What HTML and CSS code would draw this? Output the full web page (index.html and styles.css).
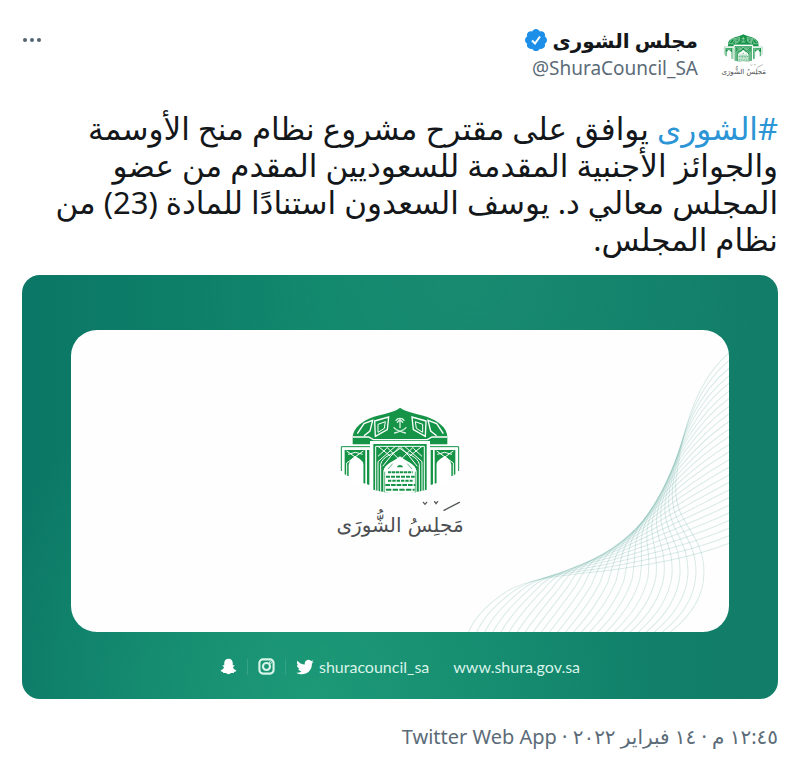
FILE: index.html
```html
<!DOCTYPE html>
<html lang="ar" dir="rtl">
<head>
    <meta charset="UTF-8">
    <meta name="viewport" content="width=device-width, initial-scale=1.0">
    <title>مجلس الشورى</title>
    <link rel="stylesheet" href="styles.css">
</head>
<body>
    <svg class="sprite" aria-hidden="true">
        <symbol id="logo" viewBox="45 35 390 410">
            <!-- dome -->
            <path fill="#159447" d="M98 148V126C100 96 130 76 162 65C200 55 225 50 240 38C258 50 284 55 320 65C354 77 382 98 382 126V148Z"/>
            <g fill="none" stroke="#fff" stroke-width="4">
                <path d="M98 126H146L160 134H322L336 126H382"/>
                <path d="M164 78L206 66L202 104L166 124Z"/>
                <path d="M318 78L276 66L280 104L316 124Z"/>
                <path d="M174 88L196 80L193 100L174 112Z" stroke-width="3"/>
                <path d="M308 88L286 80L289 100L308 112Z" stroke-width="3"/>
                <path d="M112 116L132 86L158 76L150 108L132 122"/>
                <path d="M370 116L350 86L324 76L332 108L350 122"/>
            </g>
            <!-- palm and swords -->
            <g fill="none" stroke="#d9f2e2" stroke-linecap="round" stroke-width="4">
                <path d="M240 70V98M228 76C232 68 248 68 252 76M232 82C236 74 244 74 248 82"/>
                <path d="M222 98C228 106 240 110 256 114M258 98C252 106 240 110 224 114"/>
            </g>
            <!-- side arches -->
            <g id="wing">
                <path fill="#fff" d="M60 151H152V276C116 268 78 254 60 234Z"/>
                <path fill="none" stroke="#159447" stroke-width="3" d="M64 228V155H152"/>
                <path fill="#159447" d="M74 165H136V266L130 264V208C128 196 116 190 106 184C94 190 88 198 86 210V244L74 238Z"/>
                <path fill="none" stroke="#fff" stroke-width="3" d="M80 240V204L130 168M80 168L128 202V262M84 178L106 172L128 178"/>
                <path fill="#159447" d="M141 165H148V270L141 268Z"/>
            </g>
            <use href="#wing" transform="matrix(-1 0 0 1 480 0)"/>
            <!-- main portal -->
            <path fill="#fff" d="M150 138H330V284C272 302 208 302 150 284Z"/>
            <path fill="#159447" d="M160 147H320V284C268 298 212 298 160 284Z"/>
            <g fill="none" stroke="#fff" stroke-width="3">
                <path d="M167 286V154H313V286M174 288V200L226 154M306 288V200L254 154"/>
                <path d="M182 290V208C186 184 220 178 240 160C260 178 294 184 298 208V290"/>
                <path d="M174 154L212 184L240 154L268 184L306 154M174 184L200 160M306 184L280 160M198 154L240 196L282 154M212 184L188 214M268 184L292 214"/>
            </g>
            <path fill="#fff" d="M190 292V228C194 206 222 200 240 184C258 200 286 206 290 228V292C258 297 222 297 190 292Z"/>
            <path fill="#159447" d="M231 217C233 208 247 208 249 217Z"/>
            <g fill="none" stroke="#159447" stroke-width="6">
                <path stroke-dasharray="10 2" d="M204 232H278"/>
                <path stroke-dasharray="12 3" d="M198 245H284"/>
                <path stroke-dasharray="10 3" d="M204 257H278"/>
                <path stroke-dasharray="14 3" d="M196 270H286"/>
                <path stroke-dasharray="16 4" d="M198 284H284"/>
            </g>
            <path fill="none" stroke="#159447" stroke-width="2" d="M194 292V230M286 292V230M204 222L218 206M276 222L262 206"/>
            <!-- strokes above the wordmark -->
            <path fill="none" stroke="#55585a" stroke-width="4" stroke-linecap="round" d="M372 346L418 322M310 322l5 6l5-6M344 320l4 6l5-6"/>
        </symbol>
    </svg>

    <article class="tweet">
        <header class="tweet-header">
            <div class="logo avatar">
                <svg aria-hidden="true"><use href="#logo"/></svg>
                <span>مَجلِسُ الشُّورَى</span>
            </div>
            <div class="author">
                <div class="name">
                    <span>مجلس الشورى</span>
                    <svg class="verified" viewBox="0 0 24 24" role="img" aria-label="حساب موثق">
                        <path fill="#1d8fe8" d="M23 12c0-1.600-.900-3-2.200-3.600.500-1.400.200-3-.900-4.100s-2.700-1.400-4.100-.900C15.100 2 13.700 1 12 1s-3.100 1-3.800 2.400c-1.400-.500-3-.200-4.100.900s-1.400 2.700-.900 4.100C1.900 9 1 10.400 1 12s.900 3 2.200 3.700c-.500 1.400-.200 3 .900 4.100s2.700 1.400 4.100.900C8.900 22.100 10.300 23 12 23s3.100-.900 3.800-2.300c1.400.500 3 .200 4.100-.900s1.400-2.700.900-4.100C22.100 15 23 13.600 23 12z"/>
                        <path fill="none" stroke="#fff" stroke-width="2" d="M8 12.500l3 3L16 8.500"/>
                    </svg>
                </div>
                <a class="handle" href="#" dir="ltr">@ShuraCouncil_SA</a>
            </div>
            <button class="more" type="button" aria-label="المزيد">
                <svg viewBox="0 0 20 6"><circle cx="3" cy="3" r="2"/><circle cx="10" cy="3" r="2"/><circle cx="17" cy="3" r="2"/></svg>
            </button>
        </header>

        <p class="tweet-text"><a href="#">#الشورى</a> يوافق على مقترح مشروع نظام منح الأوسمة والجوائز الأجنبية المقدمة للسعوديين المقدم من عضو المجلس معالي د. يوسف السعدون استنادًا للمادة (23) من نظام المجلس.</p>

        <div class="card">
            <div class="panel">
                <svg class="waves" id="waves" viewBox="0 0 657 302" aria-hidden="true"></svg>
                <div class="logo emblem">
                    <svg aria-hidden="true"><use href="#logo"/></svg>
                    <span>مَجلِسُ الشُّورَى</span>
                </div>
            </div>
            <div class="caption" dir="ltr">
                <svg class="icon" viewBox="0 0 24 24"><path d="M12 1C8.200 1 6 3.800 6 7v3.200c-.800.300-2-.600-2.400.300-.400 1 1.600 1.400 1.900 2.300C5.800 14.600 3.400 17 1 17.600c-.400 1.500 2.600 1.600 3.100 2 .400.400.200 1.500.700 1.600 1 .200 2-.300 3.300 0C9.500 21.600 10.400 23 12 23s2.500-1.400 3.900-1.800c1.300-.300 2.300.200 3.300 0 .500-.100.300-1.200.700-1.600.500-.400 3.500-.500 3.100-2-2.400-.600-4.800-3-4.500-4.800.300-.900 2.300-1.300 1.900-2.300-.400-.900-1.600 0-2.400-.300V7c0-3.200-2.200-6-6-6z"/></svg>
                <span class="divider"></span>
                <svg class="icon outline" viewBox="0 0 24 24"><rect x="2" y="2" width="20" height="20" rx="5"/><circle cx="12" cy="12" r="5"/><circle cx="17.500" cy="6.500" r=".5"/></svg>
                <span class="divider"></span>
                <svg class="icon bird" viewBox="0 0 24 24"><path d="M23.600 4.900c-.800.400-1.700.700-2.700.800 1-.600 1.700-1.500 2.100-2.700-.900.500-1.900.900-3 1.100a4.800 4.800 0 0 0-8.200 4.400C7.800 8.300 4.300 6.400 1.900 3.500c-1.300 2.200-.700 5 1.500 6.400-.800 0-1.500-.200-2.200-.6 0 2.300 1.600 4.300 3.900 4.800-.700.200-1.400.200-2.200.1.600 1.900 2.400 3.300 4.500 3.300A9.600 9.600 0 0 1 .400 19.500C9.500 25.300 21.200 19.300 21.200 8v-.6c1-.700 1.800-1.500 2.400-2.500z"/></svg>
                <a class="account" href="#">shuracouncil_sa</a>
                <a class="site" href="#">www.shura.gov.sa</a>
            </div>
        </div>

        <footer class="meta">
            <span>١٢:٤٥ م</span> · <span>١٤ فبراير ٢٠٢٢</span> · <a href="#">Twitter Web App</a>
        </footer>
    </article>

    <script src="waves.js"></script>
</body>
</html>
```
FILE: styles.css
```css
* {
    box-sizing: border-box;
}

body {
    margin: 0;
    background: #fff;
    color: #14171a;
    font-family: "Noto Sans", "DejaVu Sans", sans-serif;
}

a {
    color: inherit;
    text-decoration: none;
}

.sprite {
    position: absolute;
    width: 0;
    height: 0;
}

.tweet {
    padding: 26px 22px 20px;
}

.tweet-header {
    display: flex;
    align-items: flex-start;
}

.logo {
    display: grid;
    justify-items: center;
    align-items: end;
    font-family: "DejaVu Sans", sans-serif;
    color: #4c4f51;
    white-space: nowrap;
}

.logo svg,
.logo span {
    grid-area: 1 / 1;
}

.logo svg {
    width: 100%;
    height: 100%;
}

.avatar {
    width: 42px;
    height: 44px;
    margin: 8px 12px 0 0;
    font-size: 7px;
    line-height: 12px;
}

.author {
    margin-right: 26px;
}

.name {
    display: flex;
    align-items: center;
    gap: 4px;
    height: 28px;
    font-size: 20px;
    font-weight: bold;
}

.verified {
    width: 24px;
    height: 24px;
}

.handle {
    display: block;
    font-size: 19px;
    line-height: 28px;
    text-align: right;
    color: #5b6b78;
}

.more {
    margin-right: auto;
    padding: 11px 0;
    border: none;
    background: none;
    cursor: pointer;
}

.more svg {
    display: block;
    width: 20px;
    height: 6px;
    fill: #536471;
}

.tweet-text {
    margin: 28px 0 17px;
    font-size: 31px;
    line-height: 37px;
}

.tweet-text a {
    color: #2b95d6;
}

.card {
    padding: 55px 49px 0;
    border-radius: 18px;
    background:
        radial-gradient(circle at 60% 0, rgba(50, 160, 130, 0.25), transparent 45%),
        radial-gradient(circle at 38% 100%, rgba(32, 158, 122, 0.8), transparent 55%),
        linear-gradient(90deg, #0b7766, #0f866b 40%, #127d69);
}

.panel {
    display: grid;
    place-items: center;
    aspect-ratio: 657 / 302;
    border-radius: 26px;
    background: #fefefe;
    overflow: hidden;
}

.waves,
.emblem {
    grid-area: 1 / 1;
}

.waves {
    width: 100%;
    height: 100%;
    fill: none;
    stroke: #2f8f80;
    stroke-opacity: 0.18;
}

.emblem {
    width: 130px;
    height: 138px;
    margin-bottom: 12px;
    font-size: 20px;
    line-height: 38px;
}

.caption {
    display: flex;
    align-items: center;
    justify-content: center;
    height: 67px;
    padding-top: 2px;
    font-family: Lato, sans-serif;
    font-size: 16px;
    color: #d8f3e8;
}

.icon {
    width: 17px;
    height: 17px;
    fill: #fff;
}

.outline {
    fill: none;
    stroke: #d8f3e8;
    stroke-width: 3;
}

.bird {
    width: 18px;
    height: 18px;
}

.divider {
    width: 1px;
    height: 16px;
    margin: 0 10px;
    background: #35a285;
}

.account {
    margin: 0 24px 0 5px;
}

.meta {
    margin-top: 24px;
    font-size: 20px;
    line-height: 28px;
    color: #5b6b78;
}
```
FILE: waves.js
```js
const waves = document.getElementById('waves');
const count = 26;

// x,y pairs: a start point followed by three cubic segments
const upper = [657, 23, 625, 50, 610, 100, 604, 150, 600, 195, 632, 200, 632, 242, 632, 265, 620, 285, 598, 302];
const lower = [657, 213, 620, 228, 570, 236, 530, 241, 480, 246, 450, 250, 432, 263, 415, 275, 402, 288, 397, 302];

for (let i = 0; i < count; i++) {
    const t = i / (count - 1);
    const p = upper.map((v, k) => v + (lower[k] - v) * t);
    const path = document.createElementNS('http://www.w3.org/2000/svg', 'path');
    path.setAttribute('d', `M${p.slice(0, 2)}C${p.slice(2)}`);
    waves.appendChild(path);
}
```
